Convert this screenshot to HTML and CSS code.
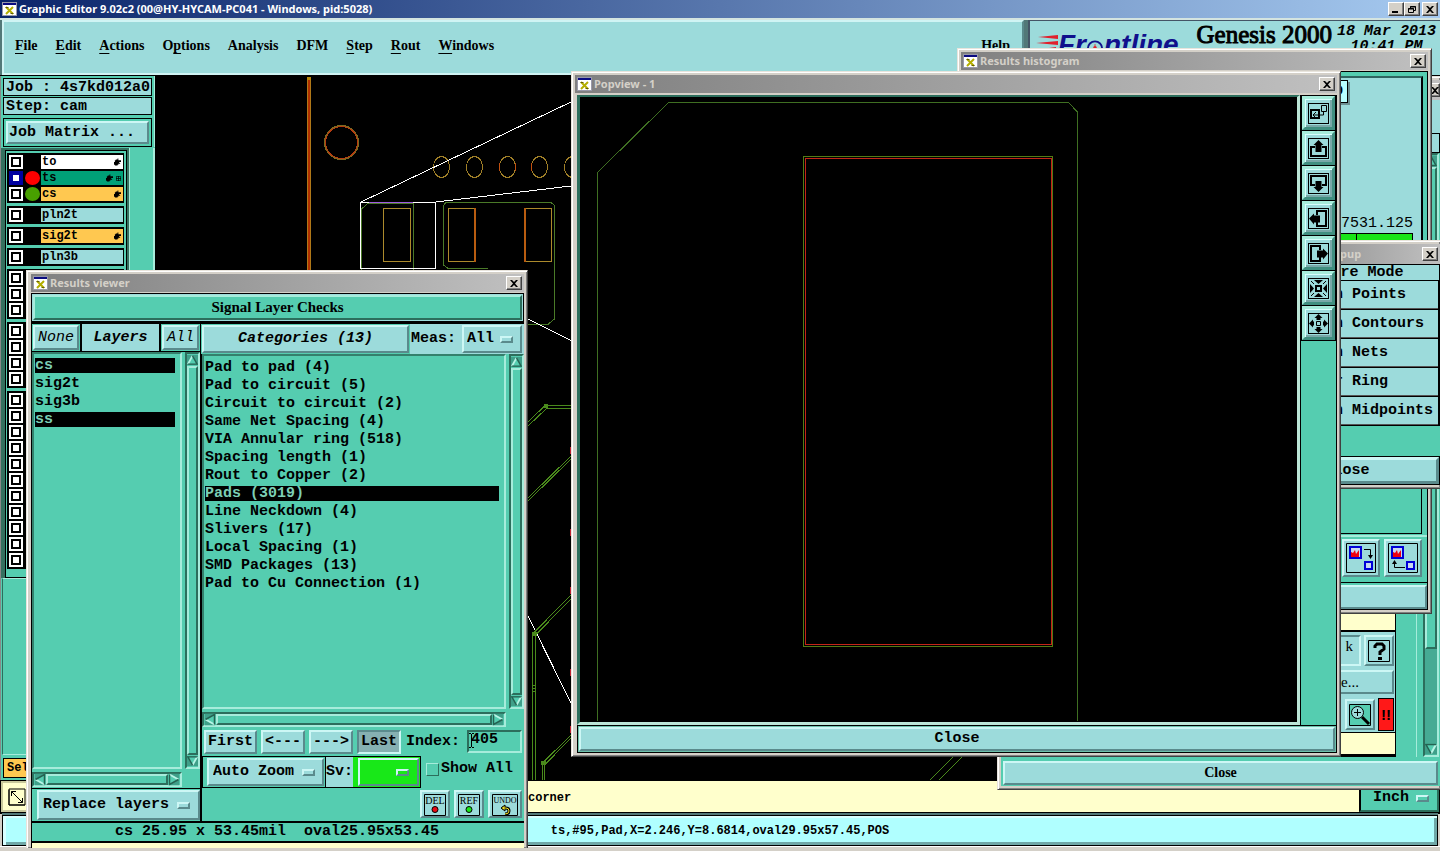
FILE: index.html
```html
<!DOCTYPE html>
<html lang="en">
<head>
<meta charset="utf-8">
<title>Graphic Editor 9.02c2</title>
<link rel="stylesheet" href="styles.css">
</head>
<body>
<svg width="0" height="0" class="defs" aria-hidden="true">
  <symbol id="app" viewBox="0 0 15 14"><rect width="15" height="14" fill="#fff"/><path d="M0 0h15v3H0z" fill="#0a0a80"/><path d="M0 .5h15M0 13.5h15M.5 0v14M14.500 0v14" stroke="#99a" stroke-width="1"/><path d="M4 5l7 7M11 5l-7 7" stroke="#b4ae00" stroke-width="2"/><path d="M3.500 5.500h3M8.500 11.500h3" stroke="#665f00"/></symbol>
  <symbol id="x" viewBox="0 0 8 7"><path d="M0 0h2l2 2 2-2h2L5 3.500 8 7H6L4 5 2 7H0l3-3.500z"/></symbol>
  <symbol id="hand" viewBox="0 0 8 8"><path d="M0 4h1V2h1V1h2V0h1v2h3v2H6v1h1v1H5v1H4v1H1V7H0z"/></symbol>
  <symbol id="up" viewBox="0 0 12 11"><path d="M0 0h12v11H0z" fill="#3f9f89"/><path d="M1 10L6 1l5 9z" fill="#55cdb0"/><path d="M1 10L6 1" stroke="#b8f5e6" stroke-width="2"/><path d="M6 1l5 9H1" fill="none" stroke="#246352" stroke-width="1.500"/></symbol>
</svg>
<div class="app">
  <header class="titlebar main-title">
    <svg class="ico"><use href="#app"/></svg><h1>Graphic Editor 9.02c2 (00@HY-HYCAM-PC041 - Windows, pid:5028)</h1>
    <span class="winbtns">
      <button aria-label="Minimize"><svg viewBox="0 0 8 7"><path d="M0 5h6v2H0z"/></svg></button><button aria-label="Restore"><svg viewBox="0 0 8 7"><path d="M2.500 2V.5h5v4H6M2 1h6M.5 2.500h5v4h-5zM0 3h6" fill="none" stroke="#000"/></svg></button><button class="gap" aria-label="Close editor"><svg><use href="#x"/></svg></button>
    </span>
  </header>
  <div class="head">
    <nav class="menubar">
      <button><u>F</u>ile</button><button><u>E</u>dit</button><button><u>A</u>ctions</button><button>O<u>p</u>tions</button><button>Analysis</button><button>DFM</button><button><u>S</u>tep</button><button><u>R</u>out</button><button><u>W</u>indows</button><button class="help">Help</button>
    </nav>
    <div class="brand">
      <div class="logo"><svg class="speed" viewBox="0 0 22 20"><path d="M2 2L22 0v4zM0 8L22 6v4zM6 14L20 12v4z" fill="#e0202c"/></svg><span>Fr</span><svg class="ring" viewBox="0 0 20 20"><path d="M2 14A8 8 0 0 1 18 14" fill="none" stroke="#10108c" stroke-width="2"/><circle cx="10" cy="13" r="2" fill="#e0202c"/><path d="M10 9v9" stroke="#e0202c"/></svg><span>ntline</span></div>
      <strong class="product">Genesis 2000</strong>
      <time>18 Mar 2013<br>10:41 PM</time>
    </div>
  </div>
  <div class="work">
    <aside class="side">
      <div class="job">
        <div class="field">Job : 4s7kd012a0</div>
        <div class="field">Step: cam</div>
        <div class="matrix"><button class="bev">Job Matrix ...</button></div>
      </div>
      <div class="layers">
        <div class="stack">
          <div class="grp">
            <label class="row"><input type="checkbox"><i></i><b class="white">to<svg><use href="#hand"/></svg></b></label>
            <label class="row"><input type="checkbox" class="on"><i class="red"></i><b class="green">ts<svg><use href="#hand"/></svg><svg class="grid" viewBox="0 0 7 7"><path d="M.5 .5h6v6h-6zM3.500 0v7M0 3.500h7" fill="none" stroke="#000"/></svg></b></label>
            <label class="row"><input type="checkbox"><i class="grn"></i><b class="gold">cs<svg><use href="#hand"/></svg></b></label>
          </div>
          <div class="grp"><label class="row"><input type="checkbox"><i></i><b>pln2t</b></label></div>
          <div class="grp"><label class="row"><input type="checkbox"><i></i><b class="gold">sig2t<svg><use href="#hand"/></svg></b></label></div>
          <div class="grp"><label class="row"><input type="checkbox"><i></i><b>pln3b</b></label></div>
          <div class="grp"><div class="row"><input type="checkbox" aria-label="Layer 7"></div><div class="row"><input type="checkbox" aria-label="Layer 8"></div><div class="row"><input type="checkbox" aria-label="Layer 9"></div></div>
          <div class="grp"><div class="row"><input type="checkbox" aria-label="Layer 10"></div><div class="row"><input type="checkbox" aria-label="Layer 11"></div><div class="row"><input type="checkbox" aria-label="Layer 12"></div><div class="row"><input type="checkbox" aria-label="Layer 13"></div></div>
          <div class="grp"><div class="row"><input type="checkbox" aria-label="Layer 14"></div><div class="row"><input type="checkbox" aria-label="Layer 15"></div><div class="row"><input type="checkbox" aria-label="Layer 16"></div><div class="row"><input type="checkbox" aria-label="Layer 17"></div><div class="row"><input type="checkbox" aria-label="Layer 18"></div><div class="row"><input type="checkbox" aria-label="Layer 19"></div><div class="row"><input type="checkbox" aria-label="Layer 20"></div><div class="row"><input type="checkbox" aria-label="Layer 21"></div><div class="row"><input type="checkbox" aria-label="Layer 22"></div><div class="row"><input type="checkbox" aria-label="Layer 23"></div><div class="row"><input type="checkbox" aria-label="Layer 24"></div></div>
        </div>
        <div class="strip"></div>
      </div>
      <div class="lower"></div>
      <div class="sel">Sel</div>
    </aside>
    <svg class="board" viewBox="155 76 1285 704" preserveAspectRatio="xMinYMin slice" fill="none" shape-rendering="crispEdges">
      <path d="M308.500 77V300" stroke="#b03000" stroke-width="3"/><path d="M307.500 77V300M310.500 77V300" stroke="#b07818"/><path d="M307 77h4v3h-4z" fill="#b8860b"/>
      <circle cx="341.500" cy="142.500" r="17" stroke="#7a6a20"/><circle cx="341.500" cy="142.500" r="16" stroke="#b83c10"/>
      <g stroke="#a08028"><ellipse cx="441.500" cy="167" rx="8" ry="10.500"/><ellipse cx="474.500" cy="167" rx="8" ry="10.500"/><ellipse cx="507.500" cy="167" rx="8" ry="10.500"/><ellipse cx="539.500" cy="167" rx="8" ry="10.500"/><ellipse cx="572.500" cy="167" rx="8" ry="10.500"/></g>
      <path d="M499.500 163v8M515.500 163v8M531.500 163v8" stroke="#c05010"/>
      <path d="M361.500 280V209l7-6H413.500V280M488 268.500H448l-5-4V206l3-3.500H551l3.500 3V319l-6 5H528" stroke="#4a7a28"/>
      <path d="M383.500 208.500h27v53h-27zM448.500 208.500h27v53h-27zM524.500 208.500h27v53h-27z" stroke="#ac8a2c"/><path d="M475 208v54M525 208v54" stroke="#b85c10" stroke-width="2"/>
      <path d="M360.500 269V202.500H435.500V269M360 268.500h76M361 202L571 102M436 202L571 186M528 319L571 340.500M528 616L571 703" stroke="#fff"/>
      <path d="M369 202.500h44" stroke="#a05ae0"/>
      <g stroke="#4a8a1c"><path d="M571 405.500H545L528 422M571 408H547L528 426M571 456L528 498M571 459L528 501M571 595L532.500 634V780M571 599L535.500 635V780M571 735L542.500 763V780M571 738L544.500 765V780M532 685h4M532 688h4M532 691h4M930 780l23-23M939 780l23-23"/><path d="M544 404h3v3h-3zM532 632h4v3h-4zM541 761h4v3h-4z" fill="#4a8a1c"/></g>
      <path d="M571 447v7M571 529v7M571 587v7M571 669v7M571 726v7" stroke="#c02030" stroke-width="2"/>
    </svg>
  </div>
  <div class="message">
    <button class="corner" aria-label="Resize"><svg viewBox="0 0 18 18"><path d="M1 2v15h16M3.500 3.500l11 11M3.500 8V3.500H8M14.500 10v4.500H10M1 1h16v16H1z" fill="none" stroke="#000"/></svg></button>
    <p>corner</p>
    <span class="opt teal unit bev"><select aria-label="Units"><option>Inch</option></select></span>
  </div>
  <footer class="status"><output>ts,#95,Pad,X=2.246,Y=8.6814,oval29.95x57.45,POS</output></footer>
  <div class="edge"></div>

  <section class="win checks" aria-label="Checks">
    <div class="titlebar"><span class="winbtns"><button aria-label="Close checks"><svg><use href="#x"/></svg></button></span></div>
    <div class="checks-main">
      <div class="checks-list">
        <div class="y1"></div>
        <div class="tools">
          <div class="line"><input class="inset" aria-label="Check" value="k"><button class="bev sq" aria-label="Help on check"><svg viewBox="0 0 22 22"><path d="M.5 .5h21v21H.5z" fill="none" stroke="#000"/><path d="M7 8V6l2-2h5l2 2v3l-4 3v3" fill="none" stroke="#000" stroke-width="3"/><path d="M10 17h4v3h-4z"/></svg></button></div>
          <button class="bev more">e...</button>
          <div class="line"><button class="bev sq zoomer" aria-label="Zoom in"><svg viewBox="0 0 22 22"><path d="M.5 .5h21v21H.5z" fill="#55cdb0" stroke="#000"/><circle cx="8.500" cy="8.500" r="6" fill="#9cdbdb" stroke="#000"/><path d="M8.500 5v7M5 8.500h7" stroke="#000"/><path d="M13 13l7 7" stroke="#000" stroke-width="3"/></svg></button><button class="alarm">!!</button></div>
        </div>
        <div class="y2"></div>
      </div>
      <div class="checks-scroll"><div class="cbox"></div><div class="vs"><svg><use href="#up"/></svg><div class="thumb"></div><div class="trough"></div><svg class="flip"><use href="#up"/></svg></div></div>
    </div>
    <div class="foot"><button class="bev serif">Close</button></div>
  </section>

  <section class="win histo" aria-label="Results histogram">
    <div class="titlebar"><svg class="ico"><use href="#app"/></svg><h2>Results histogram</h2><span class="winbtns"><button aria-label="Close histogram"><svg><use href="#x"/></svg></button></span></div>
    <div class="client">
      <div class="plot"><span class="tag">D</span><div class="measure"><span>7531.125</span><div class="bar"></div></div></div>
      <div class="pane"></div>
      <div class="hbtns">
        <button class="bev" aria-label="Histogram forward"><svg viewBox="0 0 30 30"><path d="M.5 .5h29v29H.5z" fill="none" stroke="#000"/><path d="M4 4h11v11H4zM19 19h7v7h-7z" fill="#c8d8f0" stroke="#0000d8" stroke-width="2"/><path d="M5 14V9l2 1 2-3 1 4 3-4v7z" fill="#f00010"/><path d="M18 6.500h6.500V13" fill="none" stroke="#000"/><path d="M22 12h5l-2.500 4z"/></svg></button>
        <button class="bev" aria-label="Histogram back"><svg viewBox="0 0 30 30"><path d="M.5 .5h29v29H.5z" fill="none" stroke="#000"/><path d="M4 4h11v11H4zM19 19h7v7h-7z" fill="#c8d8f0" stroke="#0000d8" stroke-width="2"/><path d="M5 14V9l2 1 2-3 1 4 3-4v7z" fill="#f00010"/><path d="M17 24.500H6.500V21" fill="none" stroke="#000"/><path d="M4 21h5l-2.500-4z"/></svg></button>
      </div>
      <button class="bev hclose" aria-label="Close"></button>
    </div>
  </section>

  <section class="win popup" aria-label="Measure popup">
    <div class="titlebar"><h2>Measure Popup</h2><span class="winbtns"><button aria-label="Close popup"><svg><use href="#x"/></svg></button></span></div>
    <div class="pm">Measure Mode</div>
    <div class="modes"><button>Between Points</button><button>Between Contours</button><button>Between Nets</button><button>Annular Ring</button><button>Between Midpoints</button></div>
    <div class="pfoot"><button class="bev">Close</button></div>
  </section>

  <section class="win popview" aria-label="Popview">
    <div class="titlebar"><svg class="ico"><use href="#app"/></svg><h2>Popview - 1</h2><span class="winbtns"><button aria-label="Close popview"><svg><use href="#x"/></svg></button></span></div>
    <div class="pv">
      <svg class="view" viewBox="580 97 717 625" preserveAspectRatio="xMinYMin slice" fill="none" shape-rendering="crispEdges"><path d="M597.500 721V172.500L668.500 102.500H1068.500L1077.500 112V721" stroke="#3f6f22"/><path d="M803.500 156.500h249v490h-249z" stroke="#557a14"/><path d="M805.500 158.500h246v486h-246z" stroke="#c42418"/></svg>
      <div class="tb">
        <button aria-label="Link view"><svg viewBox="0 0 21 21"><path d="M3 7h8v8H3z" fill="none" stroke="#000" stroke-width="2"/><path d="M13.500 2.500h5v6h-5zM15.500 8v4H5M8 9l-3 3 3 3" fill="none" stroke="#000"/></svg></button>
        <button aria-label="Pan up"><svg viewBox="0 0 21 21"><path d="M7 9H3v9h15V9h-4" fill="none" stroke="#000" stroke-width="2"/><path d="M10.500 2l5 5h-2v7h-6V7h-2z"/></svg></button>
        <button aria-label="Pan down"><svg viewBox="0 0 21 21"><path d="M7 12H3V3h15v9h-4" fill="none" stroke="#000" stroke-width="2"/><path d="M10.500 19l5-5h-2V8h-6v6h-2z"/></svg></button>
        <button aria-label="Pan left"><svg viewBox="0 0 21 21"><path d="M9 7V3h9v15H9v-4" fill="none" stroke="#000" stroke-width="2"/><path d="M1 10.500l5-5v2h6v7H6v2z"/></svg></button>
        <button aria-label="Pan right"><svg viewBox="0 0 21 21"><path d="M12 7V3H3v15h9v-4" fill="none" stroke="#000" stroke-width="2"/><path d="M20 10.500l-5-5v2H9v7h6v2z"/></svg></button>
        <button aria-label="Zoom in view"><svg viewBox="0 0 21 21"><path d="M8 8h5v5H8z" fill="none" stroke="#000" stroke-width="2"/><path d="M6 2h9l-4.500 4zM6 19h9l-4.500-4zM2 6v9l4-4.500zM19 6v9l-4-4.500z"/><path d="M3 3l3 3M18 3l-3 3M3 18l3-3M18 18l-3-3" stroke="#000"/></svg></button>
        <button aria-label="Zoom out view"><svg viewBox="0 0 21 21"><path d="M8.500 8.500h4v4h-4z" fill="none" stroke="#000"/><path d="M10.500 1l4 4h-2v2h-4V5h-2zM10.500 20l4-4h-2v-2h-4v2h-2zM1 10.500l4-4v2h1v4H5v2zM20 10.500l-4-4v2h-1v4h1v2z"/></svg></button>
      </div>
    </div>
    <div class="foot"><button class="bev">Close</button></div>
  </section>

  <section class="win results" aria-label="Results viewer">
    <div class="titlebar"><svg class="ico"><use href="#app"/></svg><h2>Results viewer</h2><span class="winbtns"><button aria-label="Close results"><svg><use href="#x"/></svg></button></span></div>
    <div class="rtitle"><div class="tbev serif">Signal Layer Checks</div></div>
    <div class="cols">
      <div class="lcol">
        <div class="lhead"><span class="cell"><button class="bev it">None</button></span><span class="lname">Layers</span><span class="cell"><button class="bev it">All</button></span></div>
        <div class="lbody">
          <ul class="list"><li class="hot">cs</li><li>sig2t</li><li>sig3b</li><li class="hot">ss</li></ul>
          <div class="vs"><svg><use href="#up"/></svg><div class="thumb"></div><svg class="flip"><use href="#up"/></svg></div>
        </div>
        <div class="hs"><svg class="lft"><use href="#up"/></svg><div class="thumb"></div><svg class="rgt"><use href="#up"/></svg></div>
        <div class="replace"><span class="opt bev"><select aria-label="Layer action"><option>Replace layers</option></select></span></div>
      </div>
      <div class="rcol">
        <div class="chead"><button class="bev cat">Categories (13)</button><label for="meas">Meas:</label><span class="opt bev"><select id="meas"><option>All</option></select></span></div>
        <div class="lbody">
          <ul class="list"><li>Pad to pad (4)</li><li>Pad to circuit (5)</li><li>Circuit to circuit (2)</li><li>Same Net Spacing (4)</li><li>VIA Annular ring (518)</li><li>Spacing length (1)</li><li>Rout to Copper (2)</li><li class="hot">Pads (3019)</li><li>Line Neckdown (4)</li><li>Slivers (17)</li><li>Local Spacing (1)</li><li>SMD Packages (13)</li><li>Pad to Cu Connection (1)</li></ul>
          <div class="vs"><svg><use href="#up"/></svg><div class="thumb"></div><svg class="flip"><use href="#up"/></svg></div>
        </div>
        <div class="hs"><svg class="lft"><use href="#up"/></svg><div class="thumb"></div><svg class="rgt"><use href="#up"/></svg></div>
        <div class="nav"><button class="bev">First</button><button class="bev">&lt;---</button><button class="bev">---&gt;</button><button class="bev pressed">Last</button><label for="idx">Index:</label><span class="inset idx"><input id="idx" value="405"><svg viewBox="0 0 5 15"><path d="M0 .5h2M3 .5h2M2.500 1v13M0 14.500h2M3 14.500h2" stroke="#000"/></svg></span></div>
        <div class="zoomrow"><span class="zbox"><span class="opt bev az"><select aria-label="Zoom mode"><option>Auto Zoom</option></select></span></span><label class="sv" for="sv">Sv:</label><span class="svbox"><span class="opt bev lime"><select id="sv"><option></option></select></span></span><label class="show"><input type="checkbox">Show All</label></div>
        <div class="acts">
          <button class="bev" aria-label="Delete"><svg viewBox="0 0 22 22"><path d="M.5 .5h21v21H.5z" fill="none" stroke="#000"/><text x="11" y="10">DEL</text><circle cx="11" cy="15.500" r="3" fill="#e80c14" stroke="#000"/></svg></button>
          <button class="bev" aria-label="Reference"><svg viewBox="0 0 22 22"><path d="M.5 .5h21v21H.5z" fill="none" stroke="#000"/><text x="11" y="10">REF</text><circle cx="11" cy="15.500" r="3" fill="#1ae81a" stroke="#000"/></svg></button>
          <button class="bev wide" aria-label="Undo"><svg viewBox="0 0 26 22"><path d="M.5 .5h25v21H.5z" fill="none" stroke="#000"/><text class="small" x="13" y="9">UNDO</text><path d="M10 14h4q3 0 3 3t-4 3" fill="none" stroke="#000" stroke-width="3"/><path d="M9 14l4-3v6z" stroke="#000" fill="#f0e020"/><path d="M11 14h3q3 0 3 3t-4 3" fill="none" stroke="#f0e020"/></svg></button>
        </div>
      </div>
    </div>
    <div class="rstat">cs 25.95 x 53.45mil&nbsp; oval25.95x53.45</div>
    <div class="rend"></div>
  </section>
</div>
</body>
</html>
```
FILE: styles.css
```css
:root {
  --blue: #9cdbdb; --blue-hi: #cdf7f5; --blue-lo: #5a8a8c;
  --teal: #55cdb0; --teal-hi: #a6ecdb; --teal-lo: #2c6e5c;
  --cream: #ffffcc; --frame: #d4d0c8;
  --mono: "Liberation Mono", monospace;
  --serif: "Liberation Serif", serif;
  --ui: "Noto Sans", sans-serif;
}
*, *::after { box-sizing: border-box; }
body { margin: 0; background: var(--frame); font: bold 15px/18px var(--mono); color: #000; overflow: hidden; }
button, input, select { font: inherit; color: inherit; margin: 0; padding: 0; border: 0; background: none; border-radius: 0; appearance: none; }
button { text-align: center; }
h1, h2, p, ul { margin: 0; padding: 0; list-style: none; font: inherit; }
svg { display: block; }
.defs { position: absolute; }
.app { position: relative; min-height: 100vh; display: flex; flex-direction: column; overflow: hidden; }
.bev, .tbev { border: 2px solid; border-color: var(--blue-hi) var(--blue-lo) var(--blue-lo) var(--blue-hi); background: var(--blue); }
.tbev { border-color: var(--teal-hi) var(--teal-lo) var(--teal-lo) var(--teal-hi); background: var(--teal); }
.inset { border: 2px solid; border-color: var(--teal-lo) var(--teal-hi) var(--teal-hi) var(--teal-lo); }
.serif { font-family: var(--serif); }

.titlebar { display: flex; align-items: center; height: 18px; padding: 0 2px; background: linear-gradient(90deg, #808080, #c0c0c0); color: var(--frame); font: bold 11px/18px var(--ui); }
.main-title { background: linear-gradient(90deg, #0a246a, #a6caf0); color: #fff; }
.ico { width: 15px; height: 14px; margin-right: 2px; flex: none; }
.titlebar h1, .titlebar h2 { white-space: nowrap; }
.winbtns { display: flex; margin-left: auto; }
.winbtns button { display: grid; place-items: center; width: 16px; height: 14px; background: var(--frame); border: 1px solid; border-color: #fff #404040 #404040 #fff; box-shadow: inset -1px -1px #808080; }
.winbtns svg { width: 8px; height: 7px; }
.winbtns .gap { margin-left: 2px; }

.head { display: flex; height: 58px; background: #527878; border-top: 2px solid #d4e4e0; border-bottom: 1px solid #000; }
.menubar { flex: 1; display: flex; align-items: center; gap: 18px; margin-left: 2px; padding: 0 12px 3px 11px; border: 2px solid; border-color: #d0f4f4 var(--blue-lo) #d0f4f4 #d0f4f4; background: var(--blue); font: bold 14px/18px var(--serif); }
.menubar u { text-underline-offset: 3px; }
.help { margin-left: auto; }
.brand { width: 412px; margin-left: 4px; display: flex; align-items: flex-start; padding: 0 4px 0 6px; background: var(--blue); border-left: 2px solid #456; border-top: 1px solid #456; }
.logo { display: flex; width: 158px; padding-top: 7px; color: #10108c; font: italic bold 28px/34px "Liberation Sans", sans-serif; }
.speed { width: 22px; height: 20px; margin-top: 7px; }
.ring { width: 18px; height: 20px; margin-top: 7px; }
.product { margin: 0 5px 0 3px; font: 25px/28px var(--serif); -webkit-text-stroke: 1px #000; white-space: nowrap; }
time { flex: 1; font-style: italic; line-height: 15px; padding-top: 3px; text-align: center; white-space: nowrap; }

.work { flex: 1; display: flex; min-height: 0; height: 704px; background: #000; }
.board { flex: 1; height: 704px; min-width: 0; }
.side { width: 155px; display: flex; flex-direction: column; background: var(--teal); border-left: 1px solid #888; white-space: nowrap; }
.job { padding: 2px 2px 0; display: flex; flex-direction: column; gap: 1px; border-right: 1px solid var(--teal-hi); }
.field { height: 18px; padding-left: 2px; line-height: 18px; background: var(--blue); border: 1px solid #000; }
.matrix { display: flex; margin-top: 2px; padding: 2px; border: 1px solid #000; }
.matrix button { flex: 1; height: 23px; padding-left: 1px; text-align: left; line-height: 16px; }
.layers { display: flex; margin-top: 1px; background: #35705f; padding-left: 4px; }
.stack { width: 122px; margin-top: 2px; padding: 2px 2px 8px 1px; display: flex; flex-direction: column; gap: 3px; background: var(--teal); border: 1px solid #000; }
.grp { background: #000; padding: 1px; }
.row { display: flex; align-items: center; height: 16px; padding-left: 1px; font-size: 12px; }
.row input { width: 14px; height: 14px; flex: none; background: #fff; box-shadow: inset 0 0 0 2px #fff, inset 0 0 0 4px #000; }
.row .on { box-shadow: inset 0 0 0 4px #0000a0; }
.row i { width: 15px; height: 14px; margin: 0 1px 0 2px; border-radius: 50%; flex: none; }
.row .red { background: #f00; } .row .grn { background: #48a000; }
.row b { flex: 1; display: flex; align-items: center; gap: 3px; height: 14px; padding: 0 2px 0 1px; line-height: 14px; background: var(--blue); }
.row b svg { width: 7px; height: 8px; }
.row b svg:first-of-type { margin-left: auto; }
.row b .grid { width: 5px; height: 5px; }
.row b.white { background: #fff; } .row b.green { background: #00a078; } .row b.gold, .sel { background: #ffc850; }
.strip { flex: 1; margin-left: 2px; background: var(--teal); border-left: 1px solid var(--teal-hi); border-right: 2px solid var(--teal-hi); }
.lower { flex: 1; margin-left: 1px; border: 1px solid; border-color: var(--teal-hi) var(--teal) var(--teal-hi) var(--teal-lo); }
.sel { width: 60px; margin: 3px 2px 2px; border: 1px solid #000; font-size: 12px; padding-left: 3px; }

.message { display: flex; height: 34px; border: solid #000; border-width: 1px 1px 2px; background: var(--cream); }
.corner { width: 32px; display: grid; place-items: center; border: 2px solid #c8c89c; }
.corner svg { width: 18px; height: 18px; }
.message p { flex: 1; padding-left: 495px; font-size: 12px; line-height: 34px; }
.unit { width: 80px; padding-top: 3px; }
.opt { display: flex; align-items: center; }
.opt::after { content: ""; width: 13px; height: 7px; margin-right: 8px; flex: none; border: 2px solid; border-color: var(--blue-hi) var(--blue-lo) var(--blue-lo) var(--blue-hi); }
.opt select { flex: 1; min-width: 0; height: 20px; padding-left: 4px; }
.opt.teal { background: var(--teal); border-color: var(--teal-hi) var(--teal-lo) var(--teal-lo) var(--teal-hi); border-left: 2px solid #000; }
.opt.teal select { padding-left: 12px; }
.status { margin: 1px 2px 0; height: 31px; border: 1px solid #000; background: #b0ffff; text-align: center; font-size: 12px; line-height: 30px; box-shadow: 0 -2px #527878, inset 3px 2px #d8ffff, inset -3px -3px #70a8a8; }
.edge { height: 5px; border-top: 1px solid #fff; }

.win { position: absolute; display: flex; flex-direction: column; background: var(--frame); border: 1px solid; border-color: #e8e4dc #404040 #404040 #e8e4dc; box-shadow: inset 1px 1px #fff, inset -1px -1px #808080; padding: 3px; white-space: nowrap; }
.foot { display: flex; padding: 3px 2px; background: #6cc0aa; border: 1px solid #000; }
.foot button { flex: 1; height: 24px; line-height: 20px; }
.thumb { flex: 1; background: var(--teal); border: 2px solid; border-color: var(--teal-hi) var(--teal-lo) var(--teal-lo) var(--teal-hi); }
.vs { display: flex; flex-direction: column; width: 15px; border: 2px solid; border-color: var(--teal-lo) var(--teal-hi) var(--teal-hi) var(--teal-lo); }
.vs svg { width: 100%; height: 12px; flex: none; }
.flip { transform: rotate(180deg); } .lft { transform: rotate(-90deg); } .rgt { transform: rotate(90deg); }
.hs { display: flex; height: 15px; border: 2px solid; border-color: var(--teal-lo) var(--teal-hi) var(--teal-hi) var(--teal-lo); }
.hs svg { width: 12px; height: 11px; flex: none; }

.checks { left: 997px; right: 0; top: 76px; border-right: 0; padding-right: 0; }
.checks .titlebar { height: 20px; padding-right: 0; }
.checks .winbtns button { width: 10px; overflow: hidden; }
.checks-main { display: flex; height: 657px; background: var(--teal); }
.checks-list { flex: 1; display: flex; flex-direction: column; justify-content: flex-end; background: var(--cream); border-right: 1px solid #000; }
.y1 { height: 20px; border-bottom: 2px solid #000; }
.tools { display: flex; flex-direction: column; gap: 4px; align-items: flex-end; padding: 3px 1px 1px; background: var(--blue); border-bottom: 1px solid #000; }
.tools .line { display: flex; gap: 3px; align-items: center; }
.tools input { width: 60px; height: 31px; padding: 0 6px 8px 0; text-align: right; font-family: var(--serif); font-weight: normal; border-color: var(--blue-lo) var(--blue-hi) var(--blue-hi) var(--blue-lo); }
.sq { width: 30px; height: 31px; padding: 2px; }
.sq svg { width: 22px; height: 22px; }
.more { width: 94px; height: 24px; padding-right: 33px; text-align: right; line-height: 18px; font-family: var(--serif); font-weight: normal; }
.alarm { width: 16px; height: 33px; background: #ff1818; border: 1px solid #000; font: bold 15px/20px "Liberation Sans", sans-serif; }
.y2 { height: 24px; border-bottom: 3px solid #000; }
.checks-scroll { width: 44px; display: flex; flex-direction: column; align-items: flex-end; border-left: 20px solid var(--teal); box-shadow: inset 1px 0 var(--teal-hi); }
.cbox { width: 24px; height: 53px; border-top: 33px solid var(--blue); background: var(--blue); box-shadow: inset 0 0 0 1px #000; }
.checks .vs { flex: 1; width: 16px; margin-right: 1px; }
.checks .trough { height: 94px; background: #46ab94; }
.checks .foot { border: 0; padding: 4px 2px 1px; background: var(--teal); }
.checks .foot button { font-size: 14px; }

.histo { left: 957px; right: 8px; top: 48px; height: 566px; }
.client { flex: 1; margin-top: 1px; display: flex; flex-direction: column; background: var(--teal); border: 1px solid #000; }
.plot { height: 360px; margin: 4px 4px 0 4px; background: var(--blue); border: 2px solid; border-color: #2f6560 #000 var(--teal-hi) #2f6560; display: flex; flex-direction: column; align-items: flex-end; }
.tag { width: 23px; height: 23px; margin: 2px 73px 0 0; border: 1px solid #000; background: #b8ffff; text-align: right; line-height: 21px; padding-right: 4px; box-shadow: 2px 2px #6c8f92; }
.measure { margin: 112px 8px 0 0; text-align: right; }
.measure span { font-weight: normal; }
.bar { width: 120px; height: 24px; border: 1px solid #000; background: linear-gradient(90deg, #18e418 62px, #000 62px, #000 63px, #18e418 63px); }
.pane { flex: 1; margin: 0 5px; border-right: 1px solid #000; border-bottom: 1px solid #000; }
.hbtns { display: flex; justify-content: flex-end; gap: 4px; padding: 2px 5px 5px; border-bottom: 1px solid #000; border-top: 2px solid var(--teal-hi); margin-top: 1px; }
.hbtns button { width: 38px; height: 38px; padding: 2px; }
.hbtns svg { width: 30px; height: 30px; }
.hclose { height: 24px; margin: 2px 0 0; }

.popup { left: 1255px; right: 0; top: 240px; border-right: 0; padding-right: 0; }
.popup .titlebar { height: 20px; padding-left: 17px; }
.pm { text-align: center; height: 17px; line-height: 15px; background: var(--blue); border: 1px solid #000; }
.modes { display: flex; flex-direction: column; gap: 1px; padding: 0 2px 1px 1px; background: #000; }
.modes button { height: 28px; padding-left: 20px; text-align: left; background: var(--blue); border-bottom: 1px solid #555; }
.pfoot { display: flex; padding: 31px 1px 1px; background: var(--teal); }
.pfoot button { flex: 1; height: 27px; padding-right: 4px; border-width: 3px 3px 3px 2px; outline: 1px solid #000; line-height: 20px; }

.popview { left: 571px; top: 71px; width: 770px; height: 686px; }
.pv { flex: 1; display: flex; min-height: 0; margin: 2px 0 0 2px; background: var(--teal); }
.view { flex: 1; min-width: 0; background: #000; border: 3px solid; border-width: 2px 3px 3px; border-color: var(--teal-lo) #bce6d8 #bce6d8 var(--teal-lo); }
.tb { width: 37px; padding: 0 1px; border: 1px solid #000; border-width: 1px 1px 0; }
.tb button { display: grid; place-items: center; width: 33px; height: 34px; margin-bottom: 1px; background: var(--blue); border: 3px solid; border-color: var(--teal-hi) #408f80 #408f80 var(--teal-hi); outline: 1px solid #000; box-shadow: inset 1px 1px #d8ffff, inset -2px -2px #78a8a8; }
.tb svg { width: 21px; height: 21px; outline: 1px solid #000; outline-offset: -1px; }
.popview .foot { margin-left: 2px; padding: 1px; }

.results { left: 26px; top: 270px; width: 502px; height: 578px; padding: 3px 3px 0 4px; border-bottom: 0; }
.rtitle { margin-top: 1px; padding: 1px; border: 1px solid #000; border-bottom-width: 3px; background: var(--blue); }
.rtitle div { height: 25px; text-align: center; font-size: 15px; line-height: 20px; }
.cols { flex: 1; display: flex; min-height: 0; border-left: 1px solid #000; background: var(--teal); }
.lcol { width: 170px; display: flex; flex-direction: column; border-right: 2px solid #000; }
.lhead { display: flex; height: 28px; border-bottom: 1px solid #000; }
.cell { padding: 1px; display: flex; }
.cell button { padding: 0 3px; line-height: 20px; font-size: 15px; }
.it { font-style: italic; font-weight: normal; }
.lname { flex: 1; background: var(--blue); border: solid #000; border-width: 0 2px; text-align: center; font-style: italic; line-height: 27px; }
.lbody { flex: 1; display: flex; gap: 3px; min-height: 0; }
.list { flex: 1; padding: 4px 5px 4px 1px; border: 2px solid; border-color: #34806c var(--teal-hi) var(--teal-hi) #34806c; }
.list li { height: 15px; margin-bottom: 3px; line-height: 15px; }
.list .hot { background: #000; color: #7ccfb6; }
.hs { margin: 3px 18px 0 0; }
.replace { display: flex; padding: 1px 0 1px 5px; margin-top: 1px; border: solid #000; border-width: 1px 0 2px; }
.replace .opt { flex: 1; height: 30px; }
.rcol { flex: 1; display: flex; flex-direction: column; min-width: 0; }
.chead { display: flex; height: 30px; align-items: center; background: var(--blue); }
.cat { width: 207px; height: 28px; font-style: italic; line-height: 22px; outline: 1px solid var(--teal); }
.chead .opt { width: 60px; height: 28px; margin: 0 2px 0 auto; }
.chead .opt::after, .az::after { margin-right: 7px; }
.chead .opt select { padding-left: 3px; }
.chead label { padding-left: 2px; }
.nav { display: flex; align-items: center; height: 29px; gap: 4px; padding: 0 2px; }
.nav button { height: 24px; padding: 0 2px; line-height: 20px; flex: none; }
.nav .pressed { background: #86b0b2; border-color: var(--blue-lo) var(--blue-hi) var(--blue-hi) var(--blue-lo); }
.nav label { padding-left: 1px; }
.idx { flex: 1; min-width: 0; height: 23px; display: flex; position: relative; margin-left: 3px; }
.idx input { width: 100%; padding-bottom: 3px; line-height: 16px; }
.idx svg { position: absolute; left: 0; top: 1px; width: 5px; height: 15px; }
.idx input { padding-left: 2px; }
.zoomrow { display: flex; height: 32px; align-items: stretch; }
.zbox, .svbox { display: flex; border: 1px solid #000; padding: 1px; }
.zbox { padding-left: 4px; }
.az { width: 117px; }
.sv { background: var(--blue); line-height: 30px; border: solid #000; border-width: 1px 0; }
.svbox { background: #18e818; border-left: 0; padding-left: 5px; }
.lime { width: 61px; background: #18e818; }
.show { display: flex; align-items: center; gap: 2px; padding: 0 0 6px 5px; }
.show input { width: 13px; height: 13px; border: 1px solid; border-color: var(--teal-hi) var(--teal-lo) var(--teal-lo) var(--teal-hi); }
.acts { display: flex; justify-content: flex-end; gap: 4px; height: 35px; padding: 2px 2px 3px; border-bottom: 2px solid #000; }
.acts button { width: 30px; padding: 2px; }
.acts .wide { width: 34px; }
.acts svg { width: 100%; height: 22px; }
.acts text { font: 10px var(--serif); text-anchor: middle; }
.acts .small { font-size: 8px; }
.rstat { height: 20px; border: solid #000; border-width: 0 0 2px 1px; background: var(--teal); line-height: 18px; padding-right: 2px; text-align: center; }
.rend { height: 5px; background: var(--cream); border-left: 1px solid #000; }
```
